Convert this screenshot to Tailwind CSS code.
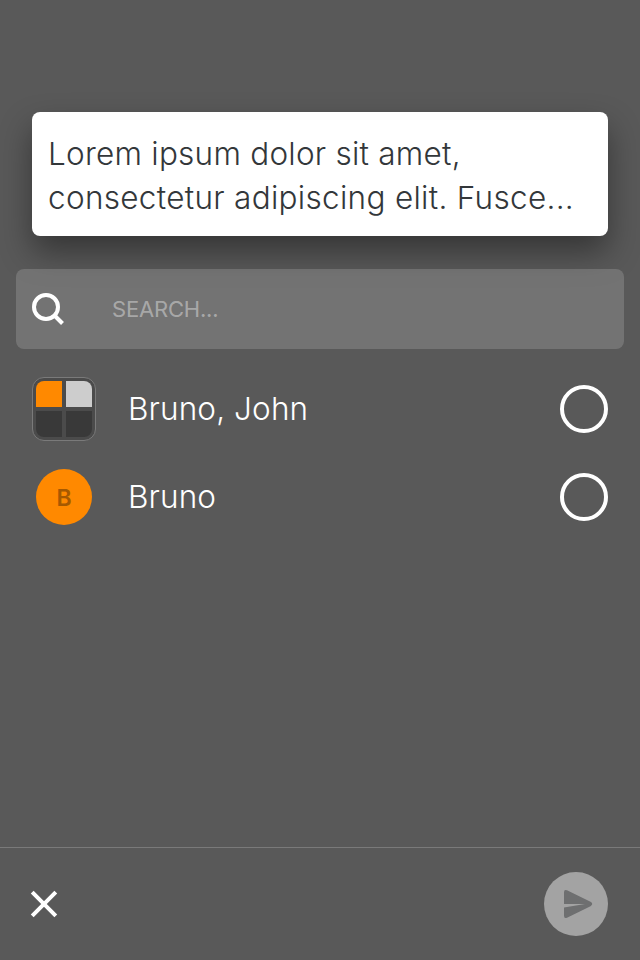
<!DOCTYPE html>
<html lang="en">
<head>
<meta charset="utf-8">
<title>Share message</title>
<script src="https://cdn.jsdelivr.net/npm/@tailwindcss/browser@4"></script>
</head>
<body class="w-[640px] h-[960px] overflow-hidden bg-[#595959] font-['Inter','Liberation_Sans',sans-serif] font-light text-white">
<div class="flex h-full flex-col">
  <section class="mx-8 mt-28 h-[124px] shrink-0 rounded-[8px] bg-white px-4 pt-5 text-[31.5px] leading-[44px] text-[#33373a] shadow-[0_16px_32px_rgba(0,0,0,0.4)]">
    <p class="whitespace-nowrap tracking-[0.24px]">Lorem ipsum dolor sit amet,</p>
    <p class="whitespace-nowrap tracking-[0.3px]">consectetur adipiscing elit. Fusce...</p>
  </section>
  <label class="relative mx-4 mt-[33px] flex h-20 shrink-0 items-center rounded-[8px] bg-white/16 pl-4">
    <svg class="size-8" viewBox="0 0 32 32" fill="none" stroke="white" stroke-width="4"><circle cx="14" cy="14" r="12"/><path d="M22.5 22.5L30.5 30.5"/></svg>
    <span class="ml-12 pt-px text-[22px] font-normal tracking-[-0.2px] text-white/40">SEARCH...</span>
  </label>
  <ul class="mt-4 flex-1 px-8">
    <li class="flex h-[88px] items-center">
      <div class="grid size-16 grid-cols-[26px_26px] grid-rows-[26px_26px] gap-1 rounded-[12px] border border-[#7a7a7a] bg-[#4b4b4b] p-[3px]">
        <span class="rounded-tl-[8px] bg-[#ff8900]"></span><span class="rounded-tr-[8px] bg-[#cdcdcd]"></span>
        <span class="rounded-bl-[8px] bg-[#393939]"></span><span class="rounded-br-[8px] bg-[#393939]"></span>
      </div>
      <span class="ml-8 flex-1 text-[31.5px] leading-[44px] tracking-[0.12px]">Bruno, John</span>
      <span class="size-12 rounded-full border-4 border-white"></span>
    </li>
    <li class="flex h-[88px] items-center">
      <div class="mx-1 flex size-14 items-center justify-center rounded-full bg-[#ff8900] pt-0.5 text-[23px] font-semibold text-[#a65900]">B</div>
      <span class="ml-8 flex-1 text-[31.5px] leading-[44px] tracking-[0.12px]">Bruno</span>
      <span class="size-12 rounded-full border-4 border-white"></span>
    </li>
  </ul>
  <footer class="flex h-[113px] shrink-0 items-center justify-between border-t border-[#7a7a7a] pr-8 pl-[30px]">
    <svg class="size-7" viewBox="0 0 28 28" fill="none" stroke="white" stroke-width="4"><path d="M2.2 2.2L25.8 25.8M25.8 2.2L2.2 25.8"/></svg>
    <div class="size-16 rounded-full bg-[#a3a3a3]">
      <svg class="size-16" viewBox="0 0 64 64" fill="#6e6f70"><path d="M20 32V20.2Q20 17 23 18.3L46.5 29.8Q50 32 46.5 34.2L23 45.7Q20 47 20 43.8V35.6L41 32Z"/></svg>
    </div>
  </footer>
</div>
</body>
</html>
